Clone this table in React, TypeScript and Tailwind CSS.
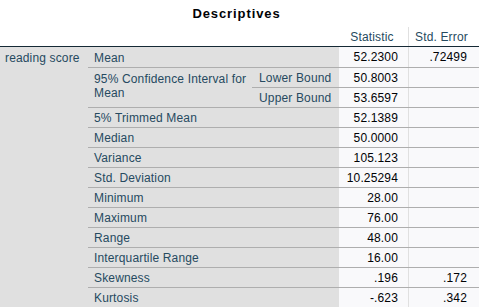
import React from 'react';

interface Row {
  label: string;
  stat: string;
  err?: string;
}

const rowsTop: Row = { label: 'Mean', stat: '52.2300', err: '.72499' };

const ciRows: Row[] = [
  { label: 'Lower Bound', stat: '50.8003' },
  { label: 'Upper Bound', stat: '53.6597' },
];

const rows: Row[] = [
  { label: '5% Trimmed Mean', stat: '52.1389' },
  { label: 'Median', stat: '50.0000' },
  { label: 'Variance', stat: '105.123' },
  { label: 'Std. Deviation', stat: '10.25294' },
  { label: 'Minimum', stat: '28.00' },
  { label: 'Maximum', stat: '76.00' },
  { label: 'Range', stat: '48.00' },
  { label: 'Interquartile Range', stat: '16.00' },
  { label: 'Skewness', stat: '.196', err: '.172' },
  { label: 'Kurtosis', stat: '-.623', err: '.342' },
];

const ValueCells: React.FC<{ row: Row }> = ({ row }) => (
  <>
    <div className="w-[69px] h-full bg-[#f9f9fb] flex items-center justify-end pr-[10px] text-[#010205]">
      {row.stat}
    </div>
    <div className="w-[71px] h-full bg-[#f9f9fb] border-l border-[#e0e0e0] flex items-center justify-end pr-[12px] text-[#010205]">
      {row.err ?? ''}
    </div>
  </>
);

const App: React.FC = () => {
  return (
    <div
      className="w-[479px] h-[307px] bg-white overflow-hidden text-[12px] leading-[14px] tracking-[0.15px] text-[#264a60]"
      style={{ fontFamily: '"Liberation Sans", Arial, sans-serif' }}
    >
      {/* Header */}
      <div className="h-[47px] border-b border-[#152935] flex flex-col">
        <div className="h-[27px] flex items-start justify-center pt-[7px] pr-[6px]">
          <span className="font-bold text-[13px] tracking-[0.9px] text-[#010205]">Descriptives</span>
        </div>
        <div className="flex h-[19px]">
          <div className="w-[339px]" />
          <div className="w-[69px] flex items-center justify-center pr-[3px]">Statistic</div>
          <div className="w-[71px] border-l border-[#e0e0e0] flex items-center pl-[6px]">Std. Error</div>
        </div>
      </div>

      {/* Body */}
      <div className="flex">
        <div className="w-[88px] bg-[#e0e0e0]">
          <div className="h-[20px] flex items-center pl-[5px] pt-[1px]">reading score</div>
        </div>
        <div className="flex-1">
          {/* Mean */}
          <div className="flex h-[20px]">
            <div className="w-[251px] h-full bg-[#e0e0e0] flex items-center pl-[6px] pt-[1px]">{rowsTop.label}</div>
            <ValueCells row={rowsTop} />
          </div>

          {/* Confidence interval */}
          <div className="flex h-[40px] border-t border-[#aeaeae]">
            <div className="w-[164px] h-full bg-[#e0e0e0] pl-[6px] pt-[4px] leading-[14px]">
              95% Confidence Interval for
              <br />
              Mean
            </div>
            <div className="flex-1 flex flex-col">
              {ciRows.map((r, i) => (
                <div
                  key={r.label}
                  className={`flex ${i === 0 ? 'h-[19px]' : 'h-[20px] border-t border-[#aeaeae]'}`}
                >
                  <div className="w-[87px] h-full bg-[#e0e0e0] flex items-center pl-[7px]">{r.label}</div>
                  <ValueCells row={r} />
                </div>
              ))}
            </div>
          </div>

          {rows.map((r) => (
            <div key={r.label} className="flex h-[20px] border-t border-[#aeaeae]">
              <div className="w-[251px] h-full bg-[#e0e0e0] flex items-center pl-[6px]">{r.label}</div>
              <ValueCells row={r} />
            </div>
          ))}
        </div>
      </div>
    </div>
  );
};

export default App;
